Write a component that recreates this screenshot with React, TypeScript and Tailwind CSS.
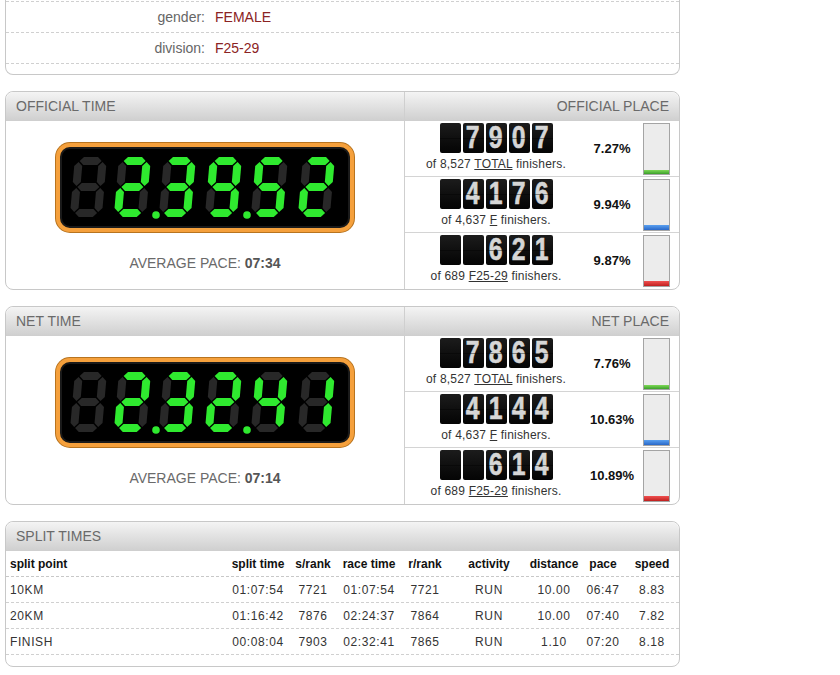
import React from 'react';

const SEGMENTS: Record<string, string> = {
  '0': 'abcdef',
  '1': 'bc',
  '2': 'abged',
  '3': 'abgcd',
  '4': 'fgbc',
  '5': 'afgcd',
  '6': 'afgedc',
  '7': 'abc',
  '8': 'abcdefg',
  '9': 'abcdfg',
  ' ': '',
};

const W = 32;
const H = 60;
const T = 8;

function segPoints(seg: string) {
  const h = T / 2;
  const g = 1;
  const hor = (y: number, x1: number, x2: number) =>
    `${x1},${y} ${x1 + h},${y - h} ${x2 - h},${y - h} ${x2},${y} ${x2 - h},${y + h} ${x1 + h},${y + h}`;
  const ver = (x: number, y1: number, y2: number) =>
    `${x},${y1} ${x + h},${y1 + h} ${x + h},${y2 - h} ${x},${y2} ${x - h},${y2 - h} ${x - h},${y1 + h}`;
  const L = h, R = W - h, Top = h, M = H / 2, B = H - h;
  switch (seg) {
    case 'a': return hor(Top, L + g, R - g);
    case 'b': return ver(R, Top + g, M - g);
    case 'c': return ver(R, M + g, B - g);
    case 'd': return hor(B, L + g, R - g);
    case 'e': return ver(L, M + g, B - g);
    case 'f': return ver(L, Top + g, M - g);
    default: return hor(M, L + g, R - g);
  }
}

function LedDigit({ ch, x }: { ch: string; x: number }) {
  const lit = SEGMENTS[ch] ?? '';
  return (
    <g transform={`translate(${x} 10) skewX(-5)`}>
      {'abcdefg'.split('').map((s) => (
        <polygon key={s} points={segPoints(s)} fill={lit.includes(s) ? '#2fea2f' : '#282828'} />
      ))}
    </g>
  );
}

function LedDisplay({ time }: { time: string }) {
  // six positions, blank = all segments dark
  const xs = [15, 59, 104, 150, 196, 243];
  return (
    <div className="w-[298px] h-[89px] rounded-[14px] border-[4px] border-[#f5a03c] bg-black shadow-[0_0_0_1px_#b8741f,inset_0_0_0_2px_#1a1a1a]">
      <svg width="290" height="81" viewBox="0 0 290 81">
        {time.split('').map((c, i) => (
          <LedDigit key={i} ch={c} x={xs[i]} />
        ))}
        <circle cx="96" cy="68" r="3.8" fill="#2fea2f" />
        <circle cx="187" cy="68" r="3.8" fill="#2fea2f" />
      </svg>
    </div>
  );
}

function Counter({ value }: { value: string }) {
  const digits = value.padStart(5, ' ').split('');
  return (
    <div className="flex gap-[2px]">
      {digits.map((d, i) => (
        <div
          key={i}
          className="relative w-[21px] h-[30px] rounded-[2px] bg-linear-to-b from-[#1c1c1c] to-[#050505] flex items-center justify-center"
        >
          <span className="block text-[31px] font-bold leading-[30px] scale-x-[0.8] text-[#d6d6d6] [-webkit-text-stroke:0.6px_#d6d6d6]">
            {d.trim()}
          </span>
          <div className="absolute left-0 right-0 top-[15px] h-px bg-black/40" />
        </div>
      ))}
    </div>
  );
}

type Place = { rank: string; total: string; group: string; pct: number; color: string };

function PlaceRow({ p, last }: { p: Place; last?: boolean }) {
  return (
    <div className={`h-[56px] flex items-start ${last ? '' : 'border-b border-[#d4d4d4]'}`}>
      <div className="w-[182px] flex flex-col items-center pt-[2px]">
        <Counter value={p.rank} />
        <div className="mt-[4px] text-[12px] leading-[14px] text-[#333] tracking-[0.2px] whitespace-nowrap">
          of {p.total} <span className="underline">{p.group}</span> finishers.
        </div>
      </div>
      <div className="w-[50px] self-center text-center text-[13px] font-bold text-[#111]">
        {p.pct.toFixed(2)}%
      </div>
      <div className="ml-[6px] mt-[2px] w-[27px] h-[52px] border border-[#a4a4a4] bg-[#ececec] flex flex-col justify-end">
        <div className={p.color} style={{ height: `${Math.round(p.pct * 0.5)}px` }} />
      </div>
    </div>
  );
}

function CardHeader({ left, right }: { left: string; right?: string }) {
  return (
    <div className="h-[29px] flex border-b border-[#cfcfcf] rounded-t-[8px] bg-linear-to-b from-[#f4f4f4] to-[#d0d0d0] text-[14px] text-[#6a6a6a]">
      {right !== undefined ? (
        <>
          <div className="w-[399px] pl-[10px] flex items-center border-r border-[#cfcfcf]">{left}</div>
          <div className="flex-1 pr-[10px] flex items-center justify-end">{right}</div>
        </>
      ) : (
        <div className="pl-[10px] flex items-center">{left}</div>
      )}
    </div>
  );
}

function TimeCard(props: { title: string; placeTitle: string; time: string; pace: string; places: Place[] }) {
  return (
    <div className="mt-[16px] border border-[#c8c8c8] rounded-[8px]">
      <CardHeader left={props.title} right={props.placeTitle} />
      <div className="flex">
        <div className="w-[399px] border-r border-[#cfcfcf] flex flex-col items-center pt-[22px]">
          <LedDisplay time={props.time} />
          <div className="mt-[23px] text-[14px] leading-[16px] text-[#6a6a6a]">
            AVERAGE PACE: <span className="font-bold text-[#555]">{props.pace}</span>
          </div>
        </div>
        <div className="flex-1">
          {props.places.map((p, i) => (
            <PlaceRow key={i} p={p} last={i === props.places.length - 1} />
          ))}
        </div>
      </div>
    </div>
  );
}

const splits = [
  ['10KM', '01:07:54', '7721', '01:07:54', '7721', 'RUN', '10.00', '06:47', '8.83'],
  ['20KM', '01:16:42', '7876', '02:24:37', '7864', 'RUN', '10.00', '07:40', '7.82'],
  ['FINISH', '00:08:04', '7903', '02:32:41', '7865', 'RUN', '1.10', '07:20', '8.18'],
];

const cols = 'grid grid-cols-[223px_58px_52px_60px_52px_76px_54px_44px_54px] items-center';

export default function App() {
  const green = 'bg-linear-to-b from-[#7ed957] to-[#3aa02a]';
  const blue = 'bg-linear-to-b from-[#5aa0f0] to-[#2a68c8]';
  const red = 'bg-linear-to-b from-[#f05050] to-[#c01e1e]';

  return (
    <div className="min-h-[675px] bg-white font-['Liberation_Sans',Arial,sans-serif]">
      <div className="ml-[5px] w-[675px]">
        <div className="border-x border-b border-[#c8c8c8] rounded-b-[8px] pb-[10px]">
          <div className="h-[2px] border-b border-dashed border-[#d0d0d0]" />
          {[
            ['gender:', 'FEMALE'],
            ['division:', 'F25-29'],
          ].map(([k, v]) => (
            <div key={k} className="h-[31px] flex items-center border-b border-dashed border-[#d0d0d0] text-[14px]">
              <div className="w-[199px] text-right text-[#666]">{k}</div>
              <div className="ml-[10px] text-[#8b2323]">{v}</div>
            </div>
          ))}
        </div>

        <TimeCard
          title="OFFICIAL TIME"
          placeTitle="OFFICIAL PLACE"
          time=" 23952"
          pace="07:34"
          places={[
            { rank: '7907', total: '8,527', group: 'TOTAL', pct: 7.27, color: green },
            { rank: '4176', total: '4,637', group: 'F', pct: 9.94, color: blue },
            { rank: '621', total: '689', group: 'F25-29', pct: 9.87, color: red },
          ]}
        />

        <TimeCard
          title="NET TIME"
          placeTitle="NET PLACE"
          time=" 23241"
          pace="07:14"
          places={[
            { rank: '7865', total: '8,527', group: 'TOTAL', pct: 7.76, color: green },
            { rank: '4144', total: '4,637', group: 'F', pct: 10.63, color: blue },
            { rank: '614', total: '689', group: 'F25-29', pct: 10.89, color: red },
          ]}
        />

        <div className="mt-[16px] border border-[#c8c8c8] rounded-[8px] pb-[11px]">
          <CardHeader left="SPLIT TIMES" />
          <div className={`${cols} h-[26px] border-b border-dashed border-[#c8c8c8] text-[12px] font-bold text-[#111] text-center`}>
            <div className="text-left pl-[4px]">split point</div>
            <div>split time</div>
            <div>s/rank</div>
            <div>race time</div>
            <div>r/rank</div>
            <div>activity</div>
            <div>distance</div>
            <div>pace</div>
            <div>speed</div>
          </div>
          {splits.map((r) => (
            <div
              key={r[0]}
              className={`${cols} h-[26px] border-b border-dashed border-[#d0d0d0] text-[12px] tracking-[0.6px] text-[#333] text-center`}
            >
              {r.map((c, i) => (
                <div key={i} className={i === 0 ? 'text-left pl-[4px]' : ''}>
                  {c}
                </div>
              ))}
            </div>
          ))}
        </div>
      </div>
    </div>
  );
}
